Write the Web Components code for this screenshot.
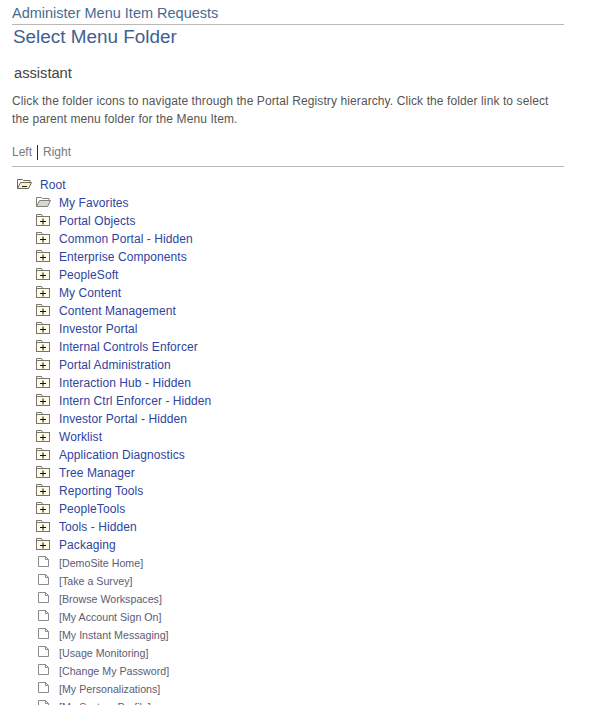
<!DOCTYPE html>
<html>
<head>
<meta charset="utf-8">
<title>Select Menu Folder</title>
<style>
  html, body { margin: 0; height: 705px; overflow: hidden; background: #fff; }
  body { font-family: "Liberation Sans", Arial, sans-serif; }
</style>
</head>
<body>
<template id="x-page-template">
  <style>
    :host { display: block; width: 552px; padding: 5px 0 0 12px; }
  </style>
  <slot></slot>
</template>

<template id="x-page-header-template">
  <style>
    :host { display: block; }
    #crumb { font-size: 14.5px; line-height: 16px; height: 19px; color: #4a6a94; border-bottom: 1px solid #b8b8b8; }
    #title { font-size: 18.9px; line-height: 22px; margin: 1px 0 0 1px; color: #3f6090; }
  </style>
  <div id="crumb"><slot name="crumb"></slot></div>
  <div id="title"><slot name="title"></slot></div>
</template>

<template id="x-intro-template">
  <style>
    :host { display: block; }
    #name { font-size: 14.67px; line-height: 16px; margin: 17px 0 0 2px; color: #444; }
    #text { font-size: 12px; letter-spacing: 0.1px; line-height: 18px; margin: 11px 0 0; color: #555; }
  </style>
  <div id="name"><slot name="name"></slot></div>
  <div id="text"><slot name="text"></slot></div>
</template>

<template id="x-tabs-template">
  <style>
    :host { display: block; height: 21px; margin-top: 17px; border-bottom: 1px solid #b8b8b8; font-size: 12px; line-height: 14px; color: #7a7a7a; }
    #row { display: flex; align-items: center; height: 14px; }
    #sep { width: 1px; height: 15px; background: #1e2a6e; margin: 0 5px 0 5px; }
  </style>
  <div id="row"><slot name="left"></slot><span id="sep"></span><slot name="right"></slot></div>
</template>

<template id="x-tree-template">
  <style>
    :host { display: block; margin-top: 9px; margin-left: 5px; }
  </style>
  <slot></slot>
</template>

<template id="x-tree-row-template">
  <style>
    :host { display: flex; align-items: center; height: 18px; font-size: 12px; letter-spacing: 0.08px; color: #2f43a0; white-space: nowrap; }
    :host([level="1"]) { padding-left: 19px; }
    :host([kind="page"]) { font-size: 10.67px; letter-spacing: 0; color: #5c5c74; }
    #icon { display: block; flex: none; width: 18px; height: 18px; margin-right: 5px; }
    svg { display: block; width: 18px; height: 18px; }
  </style>
  <span id="icon"></span>
  <slot></slot>
</template>

<x-page>
  <x-page-header>
    <span slot="crumb">Administer Menu Item Requests</span>
    <span slot="title">Select Menu Folder</span>
  </x-page-header>
  <x-intro>
    <span slot="name">assistant</span>
    <span slot="text">Click the folder icons to navigate through the Portal Registry hierarchy. Click the folder link to select the parent menu folder for the Menu Item.</span>
  </x-intro>
  <x-tabs>
    <span slot="left">Left</span>
    <span slot="right">Right</span>
  </x-tabs>
  <x-tree>
    <x-tree-row kind="open">Root</x-tree-row>
    <x-tree-row level="1" kind="open-gray">My Favorites</x-tree-row>
    <x-tree-row level="1" kind="closed">Portal Objects</x-tree-row>
    <x-tree-row level="1" kind="closed">Common Portal - Hidden</x-tree-row>
    <x-tree-row level="1" kind="closed">Enterprise Components</x-tree-row>
    <x-tree-row level="1" kind="closed">PeopleSoft</x-tree-row>
    <x-tree-row level="1" kind="closed">My Content</x-tree-row>
    <x-tree-row level="1" kind="closed">Content Management</x-tree-row>
    <x-tree-row level="1" kind="closed">Investor Portal</x-tree-row>
    <x-tree-row level="1" kind="closed">Internal Controls Enforcer</x-tree-row>
    <x-tree-row level="1" kind="closed">Portal Administration</x-tree-row>
    <x-tree-row level="1" kind="closed">Interaction Hub - Hidden</x-tree-row>
    <x-tree-row level="1" kind="closed">Intern Ctrl Enforcer - Hidden</x-tree-row>
    <x-tree-row level="1" kind="closed">Investor Portal - Hidden</x-tree-row>
    <x-tree-row level="1" kind="closed">Worklist</x-tree-row>
    <x-tree-row level="1" kind="closed">Application Diagnostics</x-tree-row>
    <x-tree-row level="1" kind="closed">Tree Manager</x-tree-row>
    <x-tree-row level="1" kind="closed">Reporting Tools</x-tree-row>
    <x-tree-row level="1" kind="closed">PeopleTools</x-tree-row>
    <x-tree-row level="1" kind="closed">Tools - Hidden</x-tree-row>
    <x-tree-row level="1" kind="closed">Packaging</x-tree-row>
    <x-tree-row level="1" kind="page">[DemoSite Home]</x-tree-row>
    <x-tree-row level="1" kind="page">[Take a Survey]</x-tree-row>
    <x-tree-row level="1" kind="page">[Browse Workspaces]</x-tree-row>
    <x-tree-row level="1" kind="page">[My Account Sign On]</x-tree-row>
    <x-tree-row level="1" kind="page">[My Instant Messaging]</x-tree-row>
    <x-tree-row level="1" kind="page">[Usage Monitoring]</x-tree-row>
    <x-tree-row level="1" kind="page">[Change My Password]</x-tree-row>
    <x-tree-row level="1" kind="page">[My Personalizations]</x-tree-row>
    <x-tree-row level="1" kind="page">[My System Profile]</x-tree-row>
  </x-tree>
</x-page>

<script>
  const openFolder = (stroke, fill, extra) => `
    <path d="M0.5 12.5V3.5h5l1 1h6.5v2" fill="none" stroke="${stroke}"/>
    <path d="M0.5 12.5l3-6h11l-3 6z" fill="${fill}" stroke="${stroke}"/>${extra}`;

  const icons = {
    "open": openFolder("#6b6b5a", "#fdf0c4", '<path d="M5 10.5h5" stroke="#222" fill="none"/>'),
    "open-gray": openFolder("#808178", "#d4d9d4", ""),
    "closed": `
      <path d="M0.5 4.5v-2h5l1 2" fill="none" stroke="#77776a"/>
      <rect x="0.5" y="4.5" width="13" height="9" fill="#fffbe6" stroke="#77776a"/>
      <path d="M4 9.5h6M7 6.5v6" stroke="#111" fill="none"/>`,
    "page": `
      <path d="M2.5 2.5h7l3 3v7h-10z" fill="#fff" stroke="#8a8a8a"/>
      <path d="M9.5 2.5v3h3" fill="none" stroke="#8a8a8a"/>`,
  };

  const define = (name) => customElements.define(name, class extends HTMLElement {
    connectedCallback() {
      if (this.shadowRoot) return;
      const template = document.getElementById(name + "-template");
      this.attachShadow({ mode: "open" }).appendChild(template.content.cloneNode(true));
      const icon = this.shadowRoot.querySelector("#icon");
      if (icon) {
        icon.innerHTML = `<svg viewBox="0 0 18 18" aria-hidden="true">${icons[this.getAttribute("kind")]}</svg>`;
      }
    }
  });

  ["x-page", "x-page-header", "x-intro", "x-tabs", "x-tree", "x-tree-row"].forEach(define);
</script>
</body>
</html>
